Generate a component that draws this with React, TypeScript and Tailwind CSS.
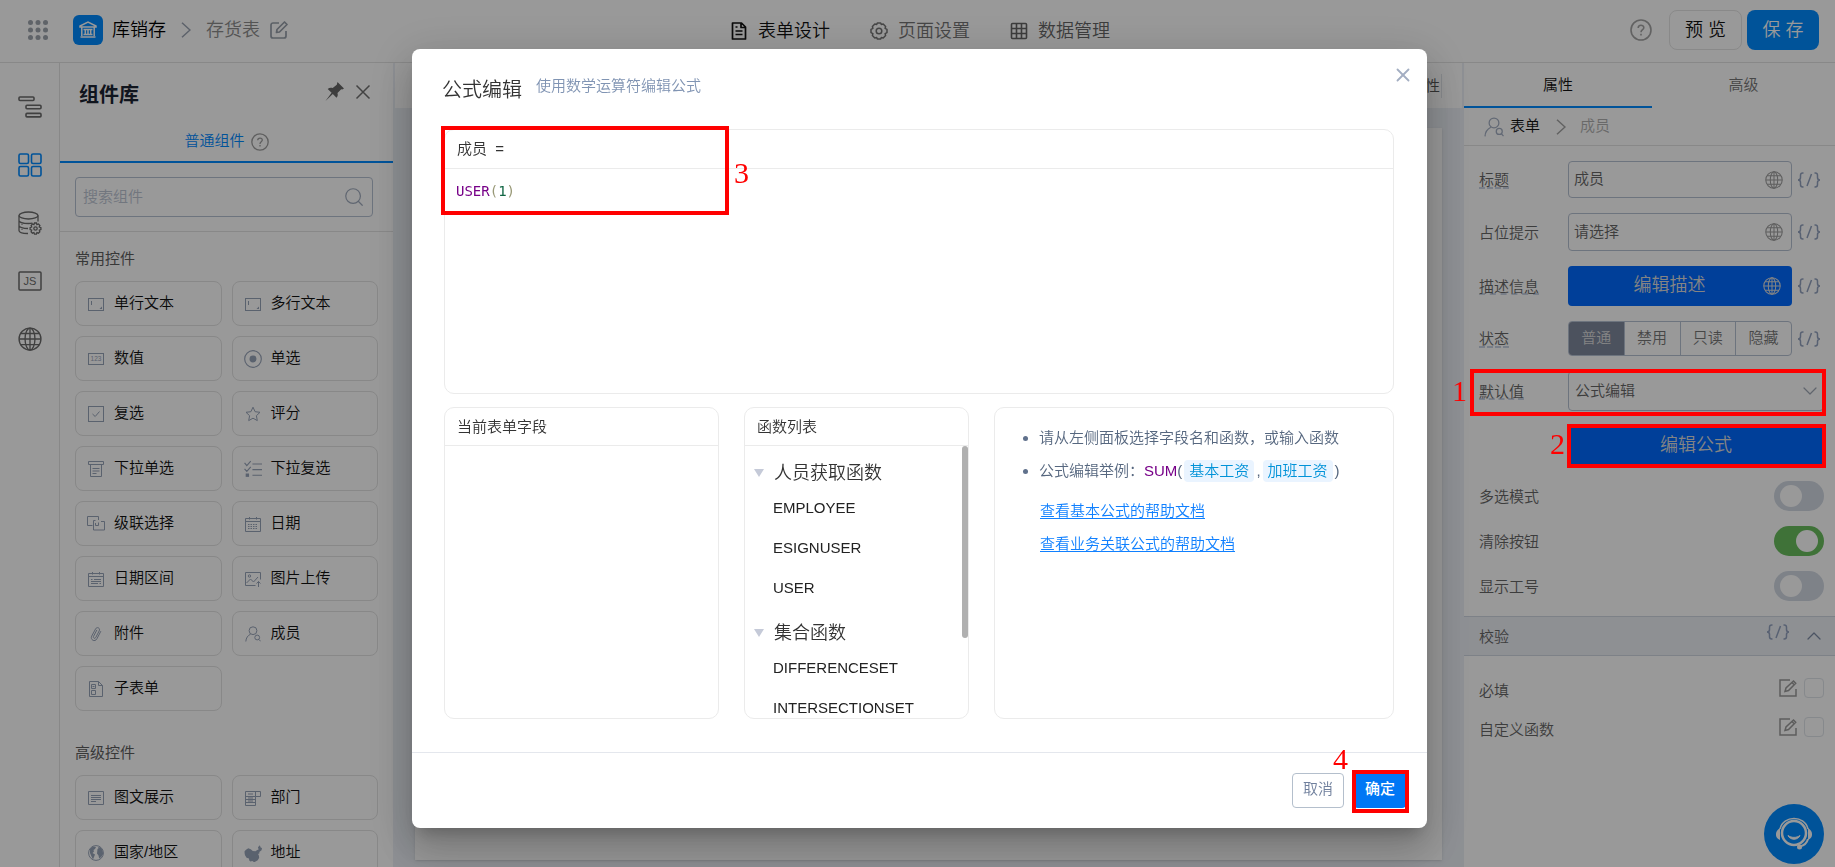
import React, { useState } from "react";
import { ChevronDown, ChevronUp, Search, X } from "lucide-react";

type IconProps = { className?: string };

function Svg({ className = "size-4", box = 16, width = 1, children }: IconProps & { box?: number; width?: number; children: React.ReactNode }) {
  return (
    <svg className={className} viewBox={`0 0 ${box} ${box}`} fill="none" stroke="currentColor" strokeWidth={width} aria-hidden="true">
      {children}
    </svg>
  );
}

const TextIcon = () => (
  <Svg>
    <rect x="0.5" y="2.5" width="15" height="12" />
    <path d="M3.5 5v4" />
    <path d="M14 10.500v2.500h-2.500z" fill="currentColor" stroke="none" />
  </Svg>
);
const NumberIcon = () => (
  <Svg>
    <rect x="0.5" y="2.5" width="15" height="11" />
    <text x="8" y="10.400" fontSize="6.500" textAnchor="middle" fill="currentColor" stroke="none" fontFamily="Liberation Sans, sans-serif">123</text>
  </Svg>
);
const RadioIcon = () => (
  <Svg className="size-[18px] -mx-px">
    <circle cx="8" cy="8" r="7.400" />
    <circle cx="8" cy="8" r="3.100" fill="currentColor" stroke="none" />
  </Svg>
);
const CheckIcon = () => (
  <Svg>
    <rect x="0.5" y="0.5" width="15" height="15" />
    <path d="M4.500 8l2.700 2.500L11.500 5.500" />
  </Svg>
);
const StarIcon = () => (
  <Svg>
    <path strokeLinejoin="round" d="M8 1.200l2.100 4.500 4.900.6-3.600 3.400.9 4.900L8 12.200l-4.300 2.400.9-4.900L1 6.300l4.900-.6z" />
  </Svg>
);
const DropdownIcon = () => (
  <Svg>
    <path d="M.500 .500h15v3H.500zM2.500 3.500v12h11v-12M4.500 7.500h7M4.500 10h7M4.500 12.500h4" />
  </Svg>
);
const MultiIcon = () => (
  <Svg className="size-[18px] -mx-px">
    <path d="M.5 2.500L2.500 5 6 1M.5 7.800l2 2.400 3.500-4M7.500 3.500h8.500M7.500 8.500h8.500M7.500 13.500h8.500" />
    <path d="M1.500 12h3v3h-3z" fill="currentColor" stroke="none" />
  </Svg>
);
const CascadeIcon = () => (
  <Svg className="size-[18px] -mx-px" box={18}>
    <path d="M5.500 10.500h-5v-9h11v3.500M11.500 7.500v3H8.500M8.500 5.500h-2v9.500h11v-8.500h-3.500M8.500 10.500V8" />
  </Svg>
);
const DateIcon = () => (
  <Svg>
    <path d="M.500 2.500h15v13H.500zM.500 5.500h15M4.500 1v2.500M11.500 1v2.500" />
    <path d="M3 8.500h10M3 10.500h10M3 12.500h10" strokeDasharray="1.500 1" />
  </Svg>
);
const RangeIcon = () => (
  <Svg>
    <path d="M.500 2.500h15v13H.500zM.500 5.500h15M4.500 1v2.500M11.500 1v2.500M3 8.500h1.500M6 8.500h7M3 10.500h10M3 12.500h7M11.500 12.500H13" />
  </Svg>
);
const ImageIcon = () => (
  <Svg>
    <path d="M10.500 14.500H.500v-13h15v7M1.500 12l4-4 3 3L13 6M13.500 16v-5.500M11.500 12.500l2-2 2 2" />
    <circle cx="4.500" cy="5" r="1.200" />
  </Svg>
);
const ClipIcon = () => (
  <Svg>
    <path strokeLinecap="round" d="M12.700 5.500l-3.800 7.300c-2 3.700-7 1-5.200-2.700L7.500 3C9 .200 12.600 2.100 11.200 4.900L7.700 11.600c-.900 1.500-3 .500-2.200-1.200L8.700 4.300" />
  </Svg>
);
const MemberIcon = ({ className = "size-4" }: IconProps) => (
  <Svg className={className}>
    <circle cx="8" cy="4.700" r="3.900" />
    <path d="M.800 15.500c.200-3.500 2-6 4.700-7.300M14 13.500l1.600 1.800" />
    <circle cx="12.200" cy="11.500" r="2.400" />
  </Svg>
);
const SubformIcon = () => (
  <Svg>
    <path d="M1.500 .500h9l4 4v11h-13zM10.500 .500v4h4M3.500 3.500h4v4h-4zM3.500 9.500h4v4h-4zM4.500 5.500h2" />
  </Svg>
);
const RichIcon = () => (
  <Svg>
    <path d="M.500 1.500h15v13H.500zM3 5.500h10M3 7.500h10M3 9.500h10M3 11.500h5" />
  </Svg>
);
const DeptIcon = () => (
  <Svg>
    <path d="M.500 1.500h15v5h-5v9h-10zM.500 6.500h10M10.500 6.500v-5M.500 9.500h10M.500 12.500h10M3 8h5M3 11h5M3 4h5" />
  </Svg>
);
const WorldIcon = () => (
  <Svg>
    <circle cx="8" cy="8" r="7.400" />
    <path fill="currentColor" stroke="none" d="M2 4l3-2.500 3 .5-1 2-1.500 1L6 6.500 4.500 8 7 9.500 6 12l-1 2.500-1.500-3L2 8zM9.500 4l2.500-2 2.500 3 .7 4-2 3-2 1.500-.7-3-1.500-2zM10 2l1.500.5-1 1z" />
  </Svg>
);
const ChinaIcon = () => (
  <Svg className="size-[18px] -mx-px">
    <path fill="currentColor" stroke="none" d="M.5 6.500L1.800 5.200 3.800 3.700l2.200 1 1.800 1.600 2.400.2 1.600-1.200L13 4.800l-.6-2 1.700-1.600 .7 1.800 1.200.6-.4 2-2 1.400.2 1.200-1.300.6.700 1.400.3 2-1.300 2.200-1.900 1.100-1.300.700-1.600-1-1.700.3-1-.9-.3-1.800-2.100-.6-1.400-2.100L.500 8z" />
  </Svg>
);

function ChevronMark() {
  return (
    <svg className="h-4 w-[10px]" viewBox="0 0 10 16" fill="none" stroke="currentColor" strokeWidth="1.500" aria-hidden="true">
      <path d="M1 .700L9 8l-8 7.300" />
    </svg>
  );
}

function Globe({ className = "size-[18px]" }: IconProps) {
  return (
    <Svg className={className} width={0.9}>
      <circle cx="8" cy="8" r="7.300" />
      <ellipse cx="8" cy="8" rx="3.300" ry="7.300" />
      <path d="M8 .7v14.600M.7 8h14.600M1.800 4.300h12.400M1.800 11.700h12.400" />
    </Svg>
  );
}

function CodeMark() {
  return (
    <svg className="h-4 w-6" viewBox="0 0 24 16" fill="none" stroke="currentColor" strokeWidth="1.500" aria-hidden="true">
      <path d="M6.500 1H5.800C4 1 3.500 1.800 3.500 3.200v2.300C3.500 7 3 8 1 8c2 0 2.500 1 2.500 2.500v2.300c0 1.400.5 2.200 2.300 2.200h.7M17.500 1h.7c1.800 0 2.300.8 2.300 2.200v2.300C20.500 7 21 8 23 8c-2 0-2.500 1-2.500 2.500v2.300c0 1.400-.5 2.200-2.300 2.200h-.7M14.500 2l-4.500 12" />
    </svg>
  );
}

function EditMark() {
  return (
    <Svg className="size-5" box={20} width={1.500}>
      <path d="M12 2H2v16h16v-7M7 13.500l1-3.500 7.500-7 2.200 2.300-7.200 7.200zM14 4.500l2.200 2.200" />
    </Svg>
  );
}

function Help({ className }: IconProps) {
  return (
    <Svg className={className} box={22} width={1.600}>
      <circle cx="11" cy="11" r="10" />
      <path d="M8.200 9c0-3.800 5.600-3.600 5.600-.3 0 2-2.800 2.100-2.800 4.600M11 14.800v1.700" />
    </Svg>
  );
}

const commonItems: [string, () => React.JSX.Element][] = [
  ["单行文本", TextIcon],
  ["多行文本", TextIcon],
  ["数值", NumberIcon],
  ["单选", RadioIcon],
  ["复选", CheckIcon],
  ["评分", StarIcon],
  ["下拉单选", DropdownIcon],
  ["下拉复选", MultiIcon],
  ["级联选择", CascadeIcon],
  ["日期", DateIcon],
  ["日期区间", RangeIcon],
  ["图片上传", ImageIcon],
  ["附件", ClipIcon],
  ["成员", MemberIcon],
  ["子表单", SubformIcon],
];
const advancedItems: [string, () => React.JSX.Element][] = [
  ["图文展示", RichIcon],
  ["部门", DeptIcon],
  ["国家/地区", WorldIcon],
  ["地址", ChinaIcon],
];

function Palette({ title, items }: { title: string; items: [string, () => React.JSX.Element][] }) {
  return (
    <section className="px-[15px]">
      <h3 className="mb-3 font-normal leading-5 text-[#5e5e5e]">{title}</h3>
      <div className="grid grid-cols-2 gap-[10px]">
        {items.map(([label, Icon]) => (
          <button key={label} className="flex h-[45px] items-center gap-[10px] rounded-lg border border-[#e3e3e3] px-3 pb-px text-[#111]">
            <span className="pt-0.5 text-[#97a3b8]"><Icon /></span>
            {label}
          </button>
        ))}
      </div>
    </section>
  );
}

function Header() {
  return (
    <header className="grid h-[63px] shrink-0 grid-cols-[1fr_auto_1fr] items-center border-b border-[#e3e3e3] bg-white pr-4 pl-[21px] text-lg">
      <div className="flex items-center pb-0.5 pl-[7px]">
        <button aria-label="应用" className="text-[#9ea5ae]">
          <svg className="size-5" viewBox="0 0 20 20" fill="currentColor">
            {[2.5, 10, 17.5].map((y) => [2.5, 10, 17.5].map((x) => <circle key={`${x}-${y}`} cx={x} cy={y} r="2.500" />))}
          </svg>
        </button>
        <span className="ml-[25px] flex size-[30px] items-center justify-center rounded-md bg-[#008aff] text-white">
          <svg className="size-[18px]" viewBox="0 0 18 18" fill="none" stroke="currentColor" strokeWidth="1.500">
            <path d="M1 6V5l8-4 8 4v1zM2.800 6v9M15.200 6v9M6.300 8.500v5M9 8.500v5M11.700 8.500v5M1.500 16h15M4.500 8.500h9M4.500 13.500h9" />
          </svg>
        </span>
        <span className="ml-[9px] text-black">库销存</span>
        <span className="mx-[15px] text-[#9aa3b2]"><ChevronMark /></span>
        <span className="text-[#8c8c8c]">存货表</span>
        <button aria-label="重命名" className="ml-[10px] text-[#98a0ab]">
          <Svg className="size-[18px]" box={18} width={1.700}>
            <path strokeLinejoin="round" d="M9 2H3a2 2 0 0 0-2 2v11a2 2 0 0 0 2 2h11a2 2 0 0 0 2-2v-5M6.500 11.500l.5-3L14.500 1l2.500 2.500-7.500 7.500z" />
          </Svg>
        </button>
      </div>
      <nav className="flex items-center gap-10 pb-px">
        <a href="#design" className="flex items-center gap-[10px] text-[#111]">
          <Svg className="size-[18px]" box={18} width={1.700}>
            <path strokeLinejoin="round" d="M2.500 1h9L15.500 5v12h-13zM11 1v4.500h4.500M5.500 9h7M5.500 12.500h7M5.500 5h2" />
          </Svg>
          表单设计
        </a>
        <a href="#page" className="flex items-center gap-[10px] text-[#757575]">
          <Svg className="size-[18px]" box={18} width={1.500}>
            <circle cx="9" cy="9" r="2.800" />
            <path strokeLinejoin="round" d="M7.300 1h3.400l.6 1.500 1.900-.4 2.400 2.500-.5 1.800 1.900 1v3.200l-1.900 1 .5 1.800-2.400 2.500-1.900-.4-.6 1.500H7.300l-.6-1.500-1.900.4-2.400-2.500.5-1.800-1.900-1V7.400l1.900-1-.5-1.800 2.400-2.500 1.900.4z" />
          </Svg>
          页面设置
        </a>
        <a href="#data" className="flex items-center gap-[10px] text-[#666]">
          <Svg className="size-[18px]" box={18} width={1.600}>
            <rect x="1.500" y="1.500" width="15" height="15" rx="1" />
            <path d="M6.500 1.500v15M11.500 1.500v15M1.500 6.500h15M1.500 11.500h15" />
          </Svg>
          数据管理
        </a>
      </nav>
      <div className="flex items-center justify-end gap-[5px] pb-0.5">
        <button aria-label="帮助" className="mr-3 text-[#a4a4a4]"><Help className="size-[22px]" /></button>
        <button className="h-10 w-[73px] rounded-lg border border-[#e5e5e5] text-[#111]">预 览</button>
        <button className="h-10 w-[72px] rounded-lg bg-[#008aff] text-white">保 存</button>
      </div>
    </header>
  );
}

function Rail() {
  return (
    <nav className="flex w-[60px] shrink-0 flex-col items-center gap-[34px] border-r border-[#e3e3e3] bg-white pt-8 text-[#6b6b6b]">
      <button aria-label="大纲">
        <Svg className="size-6" box={24} width={1.600}>
          <rect x="1" y="2" width="15" height="3.500" rx="1" />
          <rect x="8" y="10.200" width="15" height="3.500" rx="1" />
          <rect x="8" y="18.400" width="15" height="3.500" rx="1" />
        </Svg>
      </button>
      <button aria-label="组件库" className="text-[#008aff]">
        <Svg className="size-6" box={24} width={1.600}>
          <rect x="1" y="1" width="9.500" height="9.500" rx="1.500" />
          <rect x="13.500" y="1" width="9.500" height="9.500" rx="1.500" />
          <rect x="1" y="13.500" width="9.500" height="9.500" rx="1.500" />
          <rect x="13.500" y="13.500" width="9.500" height="9.500" rx="1.500" />
        </Svg>
      </button>
      <button aria-label="数据源">
        <Svg className="size-6" box={24} width={1.300}>
          <ellipse cx="10.500" cy="4.500" rx="9.500" ry="3.500" />
          <path d="M1 4.500v15c0 1.500 3 3 9 3M20 4.500v6M1 9.500c0 1.600 4 3 9.500 3 1.500 0 3-.2 4-.4M1 14.500c0 1.600 4 3 9 3M4 13v.8M4 18v.8" />
          <circle cx="17.500" cy="17.500" r="1.700" />
          <path d="M16.500 12h2l.4 1.600 1.600-.6 1.400 1.500-.7 1.400 1.700.8v1.800l-1.600.7.5 1.600-1.400 1.400-1.500-.6-.5 1.500h-1.900l-.6-1.500-1.500.6-1.300-1.400.6-1.600-1.600-.7v-1.800l1.600-.8-.6-1.400 1.300-1.500 1.500.6z" />
        </Svg>
      </button>
      <button aria-label="脚本">
        <Svg className="size-6" box={24} width={1.500}>
          <rect x="1" y="3" width="22" height="18" rx="1" />
          <text x="12" y="16" fontSize="11" textAnchor="middle" fill="currentColor" stroke="none" fontFamily="Liberation Sans, sans-serif">JS</text>
        </Svg>
      </button>
      <button aria-label="语言"><Globe className="size-6" /></button>
    </nav>
  );
}

function Library() {
  return (
    <aside className="flex w-[333px] shrink-0 flex-col overflow-hidden bg-white">
      <div className="flex items-center pt-[18px] pr-[22px] pl-[19px]">
        <h2 className="flex-1 text-xl leading-7 font-bold text-[#1c2433]">组件库</h2>
        <button aria-label="固定" className="mr-[10px] mb-[6px] text-[#666]">
          <svg className="size-[22px]" viewBox="0 0 22 22" fill="currentColor">
            <path d="M14.500 1l6.500 6.500-1.800 1-1-.3-3.700 3.800c.6 1.900.2 3.600-1 4.800l-3.700-3.800-7.300 7 6.100-8.200-3.900-3.900c1.400-1.200 3.300-1.500 5-.8L13.800 3.800z" />
          </svg>
        </button>
        <button aria-label="关闭面板" className="mb-[6px] text-[#707070]">
          <Svg className="size-4" width={1.500}><path d="M1.500 1.500l13 13M14.500 1.500l-13 13" /></Svg>
        </button>
      </div>
      <div className="mt-[13px] flex h-[41px] shrink-0 items-center justify-center gap-[6px] border-b-2 border-[#008aff] text-[#008aff]">
        普通组件
        <span className="text-[#9e9e9e]"><Help className="size-[18px]" /></span>
      </div>
      <div className="border-b border-[#e3e3e3] px-[15px] py-[14px]">
        <label className="flex h-10 w-[298px] items-center rounded border border-[#b6c1d2] pr-[7px] pl-[7px]">
          <input aria-label="搜索组件" placeholder="搜索组件" className="min-w-0 flex-1 bg-transparent outline-none placeholder:text-[#bcc5d3]" />
          <Search className="size-[22px] text-[#a0abbd]" strokeWidth={1.300} />
        </label>
      </div>
      <div className="flex flex-col gap-8 overflow-hidden pt-[17px]">
        <Palette title="常用控件" items={commonItems} />
        <Palette title="高级控件" items={advancedItems} />
      </div>
    </aside>
  );
}

function Mark({ n, box, digit }: { n: string; box: string; digit: string }) {
  return (
    <>
      <span className={`pointer-events-none absolute z-50 border-4 border-[#f00] ${box}`} />
      <span className={`pointer-events-none absolute z-50 font-['Liberation_Serif',serif] text-[30px] leading-8 text-[#f00] ${digit}`}>{n}</span>
    </>
  );
}

const labelCls = "w-[89px] shrink-0 text-[#666] pt-0.5";
const dotted = "underline decoration-[#b8c4da] decoration-dashed underline-offset-2";

function Code() {
  return <button aria-label="绑定变量" className="ml-[5px] text-[#93a2bf]"><CodeMark /></button>;
}

function Switch({ id, label, initial = false }: { id: string; label: string; initial?: boolean }) {
  const [on, setOn] = useState(initial);
  return (
    <div className="flex h-[30px] items-center justify-between">
      <label htmlFor={id} className="pt-0.5 text-[#666]">{label}</label>
      <input
        id={id}
        type="checkbox"
        role="switch"
        checked={on}
        onChange={() => setOn(!on)}
        className="h-[30px] w-[50px] appearance-none rounded-full bg-[#d2d9e3] p-1 before:ml-0.5 before:block before:size-[22px] before:rounded-full before:bg-white checked:bg-[#69be5e] checked:before:ml-[18px]"
      />
    </div>
  );
}

function Properties() {
  const [state, setState] = useState("普通");
  return (
    <aside className="w-[371px] shrink-0 bg-white">
      <div className="flex h-[45px]">
        <button className="w-[188px] border-b-2 border-[#008aff] pt-0.5 text-[#111]">属性</button>
        <button className="flex-1 border-b-2 border-transparent pt-0.5 text-[#777]">高级</button>
      </div>
      <div className="flex h-[38px] items-center border-b border-[#e3e3e3] pl-5">
        <MemberIcon className="size-5 text-[#a3aec2]" />
        <span className="ml-[6px] text-[#111]">表单</span>
        <span className="mr-[14px] ml-4 text-[#a3a3a3]"><ChevronMark /></span>
        <span className="text-[#b0b0b0]">成员</span>
      </div>
      <div className="flex flex-col gap-[15px] pt-[15px] pr-[11px] pb-[15px] pl-[15px]">
        <div className="flex h-[37px] items-center">
          <label htmlFor="f-title" className={labelCls}><span className={dotted}>标题</span></label>
          <span className="flex h-full w-[224px] items-center rounded border border-[#b6c1d2] px-[5px] pr-2">
            <input id="f-title" defaultValue="成员" className="min-w-0 flex-1 bg-transparent text-[#666] outline-none" />
            <span className="text-[#9c9c9c]"><Globe /></span>
          </span>
          <Code />
        </div>
        <div className="flex h-[38px] items-center">
          <label htmlFor="f-hint" className={labelCls}>占位提示</label>
          <span className="flex h-full w-[224px] items-center rounded border border-[#b6c1d2] px-[5px] pr-2">
            <input id="f-hint" defaultValue="请选择" className="min-w-0 flex-1 bg-transparent text-[#666] outline-none" />
            <span className="text-[#9c9c9c]"><Globe /></span>
          </span>
          <Code />
        </div>
        <div className="flex h-10 items-center">
          <span className={labelCls}><span className={dotted}>描述信息</span></span>
          <button className="flex h-full w-[224px] items-center rounded bg-[#006aff] pr-[11px] pl-2 text-lg text-[#ddd]">
            <span className="flex-1 pb-0.5">编辑描述</span>
            <Globe />
          </button>
          <Code />
        </div>
        <div className="flex h-[35px] items-center">
          <span className={labelCls}><span className={dotted}>状态</span></span>
          <div className="flex h-full w-[224px] divide-x divide-[#b6c1d2] overflow-hidden rounded border border-[#b6c1d2]">
            {["普通", "禁用", "只读", "隐藏"].map((s) => (
              <button key={s} aria-pressed={s === state} onClick={() => setState(s)} className={s === state ? "flex-1 bg-[#7f899d] text-[#ddd]" : "flex-1 text-[#777]"}>
                {s}
              </button>
            ))}
          </div>
          <Code />
        </div>
        <div className="relative flex h-10 items-center">
          <label htmlFor="f-default" className={labelCls}><span className={dotted}>默认值</span></label>
          <span className="relative h-full flex-1">
            <select id="f-default" className="h-full w-full appearance-none rounded border border-[#b6c1d2] bg-transparent pl-[6px] text-[#666] outline-none">
              <option>公式编辑</option>
            </select>
            <ChevronDown className="pointer-events-none absolute top-2 right-0.5 size-6 text-[#a0a8b6]" strokeWidth={1.200} />
          </span>
          <Mark n="1" box="-top-0.5 -bottom-[5px] -left-[9px] -right-0.5" digit="top-1 -left-[27px]" />
        </div>
        <div className="relative ml-[89px] h-10">
          <button className="h-full w-full rounded bg-[#006aff] pb-0.5 text-lg text-[#ddd]">编辑公式</button>
          <Mark n="2" box="-top-0.5 -bottom-0.5 -left-px -right-0.5" digit="top-0.5 -left-[18px]" />
        </div>
        <Switch id="f-multi" label="多选模式" />
        <Switch id="f-clear" label="清除按钮" initial />
        <Switch id="f-number" label="显示工号" />
      </div>
      <div className="flex h-10 items-center border-y border-[#d0d7e2] bg-[#edf0f6] pr-[9px] pl-[15px]">
        <span className="flex-1 pt-0.5 text-[#666]">校验</span>
        <span className="mb-px"><Code /></span>
        <button aria-label="收起" className="ml-3 text-[#7f8da6]"><ChevronUp className="size-6" strokeWidth={1.300} /></button>
      </div>
      <div className="flex flex-col gap-[19px] pt-[22px] pr-[11px] pl-[15px] text-[#666]">
        {[["f-required", "必填"], ["f-custom", "自定义函数"]].map(([id, label]) => (
          <div key={id} className="flex h-5 items-center">
            <label htmlFor={id} className="flex-1 pt-[6px]">{label}</label>
            <button aria-label={`编辑${label}`} className="mr-[6px] text-[#9c9c9c]"><EditMark /></button>
            <input id={id} type="checkbox" className="size-5 appearance-none rounded border border-[#e0e4ea]" />
          </div>
        ))}
      </div>
    </aside>
  );
}

function Canvas() {
  return (
    <main className="mx-0.5 flex min-w-0 flex-1 flex-col">
      <div className="flex h-[45px] shrink-0 items-center justify-end bg-white pr-5">
        <span className="border-r border-[#e0e4ea] pr-px leading-6 text-[#555]">表单属性</span>
      </div>
      <div className="flex flex-1 px-5 pt-5 pb-[7px]">
        <div className="flex-1 bg-white shadow" />
      </div>
    </main>
  );
}

function Support() {
  return (
    <button aria-label="客服" className="fixed right-[11px] bottom-[3px] flex size-[60px] items-center justify-center rounded-full bg-[#008aff] text-white">
      <svg className="size-[38px]" viewBox="0 0 38 38" fill="none" stroke="currentColor" strokeWidth="2">
        <circle cx="19" cy="18" r="12" strokeWidth="2.500" />
        <path d="M5 14C8 0 30 0 33 14" strokeWidth="1.500" />
        <path d="M5 13v12C1 23 1 21 1 19s1-4 4-6zM33 13v12c4-2 4-4 4-6s-1-4-4-6z" fill="currentColor" strokeWidth="0" />
        <path d="M13 20.500c3.500 2.500 8.500 2.500 12 0-2 5-10 5-12 0z" fill="currentColor" strokeWidth="1" />
        <path d="M33 24c-1 4-4 6.500-8 7.500" />
        <circle cx="24.500" cy="32" r="2.500" fill="currentColor" strokeWidth="0" />
      </svg>
    </button>
  );
}

const groups = [
  { title: "人员获取函数", items: ["EMPLOYEE", "ESIGNUSER", "USER"] },
  { title: "集合函数", items: ["DIFFERENCESET", "INTERSECTIONSET"] },
];

function Chip({ children }: { children: string }) {
  return <span className="mx-0.5 inline-block rounded bg-[#eaf4ff] px-[5px] leading-[22px] text-[#0092d8]">{children}</span>;
}

function FormulaDialog() {
  const card = "overflow-hidden rounded-[10px] border border-[#ebebeb]";
  return (
    <div className="fixed inset-0 z-40 flex items-start justify-center bg-black/40 pt-[49px] pl-1">
      <div
        role="dialog"
        aria-modal="true"
        aria-labelledby="dlg-title"
        className="w-[1015px] rounded-lg bg-white shadow-[0_11px_15px_-7px_rgba(0,0,0,0.2),0_24px_38px_3px_rgba(0,0,0,0.14),0_9px_46px_8px_rgba(0,0,0,0.12)]"
      >
        <div className="flex h-20 items-start pr-[13px] pl-[30px]">
          <h1 id="dlg-title" className="pt-[27px] text-xl leading-7 font-[350] text-[#333]">公式编辑</h1>
          <p className="ml-[14px] flex-1 pt-[26px] leading-[22px] text-[#8094b3]">使用数学运算符编辑公式</p>
          <button aria-label="关闭" className="mt-[15px] text-[#a3aec2]"><X className="size-[22px]" strokeWidth={2} /></button>
        </div>
        <div className="pr-[33px] pl-8">
          <div className="relative">
            <div className={`flex h-[265px] flex-col ${card}`}>
              <div className="h-[39px] shrink-0 border-b border-[#ebebeb] pl-3 leading-[38px] text-[#333]">成员&nbsp; =</div>
              <div
                role="textbox"
                aria-label="公式"
                contentEditable
                suppressContentEditableWarning
                className="flex-1 pt-3 pl-[11px] font-['DejaVu_Sans_Mono',monospace] text-sm leading-5 outline-none"
              >
                <span className="text-[#770088]">USER</span>
                <span className="text-[#999977]">(</span>
                <span className="text-[#116644]">1</span>
                <span className="text-[#999977]">)</span>
              </div>
            </div>
            <Mark n="3" box="-top-[3px] -left-[3px] h-[89px] w-[288px]" digit="top-7 left-[290px]" />
          </div>
          <div className="mt-[13px] grid h-[312px] grid-cols-[275px_225px_1fr] gap-[25px]">
            <section className={card}>
              <h2 className="h-[38px] border-b border-[#ebebeb] pl-3 font-[350] leading-[38px] text-[#333]">当前表单字段</h2>
            </section>
            <section className={`relative ${card}`}>
              <h2 className="h-[38px] border-b border-[#ebebeb] pl-3 font-[350] leading-[38px] text-[#333]">函数列表</h2>
              <div className="h-[272px] overflow-hidden pt-0.5">
                {groups.map((g) => (
                  <div key={g.title}>
                    <button className="flex h-10 items-center gap-[10px] pt-[10px] pl-[9px] text-lg text-[#333]">
                      <svg className="h-2 w-[10px] text-[#c5cad8]" viewBox="0 0 10 8" fill="currentColor" aria-hidden="true"><path d="M0 0h10L5 8z" /></svg>
                      {g.title}
                    </button>
                    <ul>
                      {g.items.map((f) => (
                        <li key={f} className="h-10 pl-7 leading-10 text-[#222]">{f}</li>
                      ))}
                    </ul>
                  </div>
                ))}
              </div>
              <span className="absolute top-[38px] right-0 h-48 w-[6px] rounded-full bg-[#b0b0b0]" />
            </section>
            <section className={`${card} pt-[14px] pl-11 text-[#56677f]`}>
              <ul>
                {[0, 1].map((i) => (
                  <li key={i} className="flex h-[33px] items-center">
                    <span className="-ml-4 mr-[11px] size-[5px] shrink-0 rounded-full bg-[#60718c]" />
                    {i === 0 ? (
                      <span>请从左侧面板选择字段名和函数，或输入函数</span>
                    ) : (
                      <span>
                        公式编辑举例：<span className="text-[#770088]">SUM</span>(<Chip>基本工资</Chip>,<Chip>加班工资</Chip>)
                      </span>
                    )}
                  </li>
                ))}
              </ul>
              <div className="flex flex-col items-start gap-[11px] pt-3 pl-px">
                <a href="#basic" className="leading-[22px] text-[#1080ff] underline underline-offset-2">查看基本公式的帮助文档</a>
                <a href="#business" className="leading-[22px] text-[#1080ff] underline underline-offset-2">查看业务关联公式的帮助文档</a>
              </div>
            </section>
          </div>
        </div>
        <div className="mt-[33px] flex justify-end gap-[10px] border-t border-[#e4e7ed] pt-5 pr-[21px] pb-5">
          <button className="h-[35px] w-[52px] rounded border border-[#b4bfcc] pb-0.5 text-[#6f7f9c]">取消</button>
          <span className="relative">
            <button className="h-[35px] w-[52px] rounded bg-[#0077f5] pb-0.5 font-medium text-white">确定</button>
            <Mark n="4" box="-top-[3px] -bottom-[5px] -left-0.5 -right-[3px]" digit="-top-[30px] -left-[21px]" />
          </span>
        </div>
      </div>
    </div>
  );
}

export default function App() {
  return (
    <div className="flex h-screen flex-col overflow-hidden bg-[#ecf0f6] font-['Liberation_Sans','Noto_Sans_CJK_SC',sans-serif] text-[15px] font-[350]">
      <Header />
      <div className="flex min-h-0 flex-1">
        <Rail />
        <Library />
        <Canvas />
        <Properties />
      </div>
      <Support />
      <FormulaDialog />
    </div>
  );
}
